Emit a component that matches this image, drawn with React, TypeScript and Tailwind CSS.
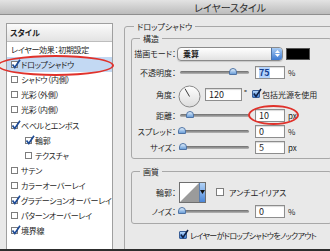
import React from 'react';

type Effect = {
  label: string;
  checked?: boolean;
  indent?: boolean;
  selected?: boolean;
  plain?: boolean;
};

const effects: Effect[] = [
  { label: 'レイヤー効果：初期設定', plain: true },
  { label: 'ドロップシャドウ', checked: true, selected: true },
  { label: 'シャドウ（内側）' },
  { label: '光彩（外側）' },
  { label: '光彩（内側）' },
  { label: 'ベベルとエンボス', checked: true },
  { label: '輪郭', checked: true, indent: true },
  { label: 'テクスチャ', indent: true },
  { label: 'サテン' },
  { label: 'カラーオーバーレイ' },
  { label: 'グラデーションオーバーレイ', checked: true },
  { label: 'パターンオーバーレイ' },
  { label: '境界線', checked: true },
];

export default function App() {
  return (
    <div className="w-[330px] h-[251px] overflow-hidden flex flex-col bg-[#e9e9e9] text-[#1e1e1e] font-['Noto_Sans_CJK_JP','Noto_Sans',sans-serif] [font-feature-settings:'palt'] text-[8px] leading-[11px]">
      {/* Title bar (window is wider than the crop, title centred on it) */}
      <div className="w-[460px] h-[15px] shrink-0 flex items-center justify-center border-b border-[#8f8f8f] bg-linear-to-b from-[#e3e3e3] to-[#bcbcbc] text-[10px] text-[#2b2b2b]">
        レイヤースタイル
      </div>

      <div className="flex flex-1 min-h-0 overflow-hidden">
        <div className="w-[113px] shrink-0 pl-[6px] pt-[8px]">
          <StyleList />
        </div>
        <div className="pl-[11px] pt-[6px]">
          <DropShadowPanel />
        </div>
      </div>

      <div className="h-[2px] shrink-0 bg-[#2d2d2d]" />
    </div>
  );
}

function StyleList() {
  return (
    <div className="relative h-[240px] w-[107px] border border-[#9f9f9f] bg-white">
      <div className="h-[18px] flex items-center pl-[3px] border-b border-[#bdbdbd] bg-linear-to-b from-[#fbfbfb] to-[#e3e3e3] font-bold">
        スタイル
      </div>
      {effects.map((e) => (
        <EffectRow key={e.label} {...e} />
      ))}
      {/* red marker ellipse */}
      <div className="absolute left-[-10px] top-[31px] w-[117px] h-[21px] rounded-[50%] border-2 border-[#e0322b]" />
    </div>
  );
}

function EffectRow({ label, checked, indent, selected, plain }: Effect) {
  return (
    <div
      className={`h-[15.1px] flex items-center gap-[3px] whitespace-nowrap ${indent ? 'pl-[18px]' : 'pl-[4px]'} ${selected ? 'bg-[#c3d9f3]' : ''}`}
    >
      {!plain && <ListCheck checked={checked} />}
      <span className="tracking-[-0.3px]">{label}</span>
    </div>
  );
}

function ListCheck({ checked }: { checked?: boolean }) {
  return (
    <span className="relative w-[7px] h-[7px] shrink-0 border border-[#7d7d7d] bg-white">
      {checked && (
        <svg className="absolute left-[-1px] top-[-3px]" width="10" height="10" viewBox="0 0 10 10">
          <path d="M1.5 5.5 L3.8 8.5 L9 0.8" stroke="#1d4b96" strokeWidth="1.7" fill="none" />
        </svg>
      )}
    </span>
  );
}

function AquaCheck({ className = '' }: { className?: string }) {
  return (
    <span className={`relative w-[8px] h-[8px] shrink-0 rounded-[1px] border border-[#3a5f98] bg-linear-to-b from-[#b4d5f7] to-[#3f80d6] ${className}`}>
      <svg className="absolute left-[-1px] top-[-3px]" width="10" height="10" viewBox="0 0 10 10">
        <path d="M1.8 5.6 L4 8.4 L9 1" stroke="#0d1f45" strokeWidth="1.6" fill="none" />
      </svg>
    </span>
  );
}

function Label({ children, className = '' }: { children: React.ReactNode; className?: string }) {
  return <span className={`w-[44px] shrink-0 text-right whitespace-nowrap ${className}`}>{children}</span>;
}

function Slider({ knob, className = '' }: { knob: number; className?: string }) {
  return (
    <div className={`relative h-[3px] w-[69px] shrink-0 rounded-full bg-linear-to-b from-[#6c6c6c] to-[#b8b8b8] ${className}`}>
      <span
        className="absolute top-[-3px] w-[8px] h-[7px] rounded-t-full rounded-b-[2px] border border-[#4f74a6] bg-linear-to-b from-[#e2effc] to-[#6c9fd8]"
        style={{ left: knob }}
      />
    </div>
  );
}

function Field({ children, className = '' }: { children: React.ReactNode; className?: string }) {
  return (
    <div className={`h-[13px] w-[30px] shrink-0 flex items-center pl-[3px] border border-[#8d8d8d] bg-white shadow-[inset_0_1px_1px_rgba(0,0,0,0.15)] text-[9px] ${className}`}>
      {children}
    </div>
  );
}

function Group({ title, className = '', children }: { title: string; className?: string; children: React.ReactNode }) {
  return (
    <fieldset className={`border border-[#a8a8a8] rounded-[3px] ${className}`}>
      <legend className="ml-[8px] px-[3px] leading-[11px]">{title}</legend>
      {children}
    </fieldset>
  );
}

function DropShadowPanel() {
  return (
    <fieldset className="w-[215px] h-[240px] border border-[#a8a8a8] rounded-[3px] px-[6px]">
      <legend className="ml-[3px] px-[3px] leading-[11px]">ドロップシャドウ</legend>

      <Group title="構造" className="mt-[1px] pb-[3px]">
        {/* 描画モード */}
        <div className="mt-[2px] h-[15px] flex items-center">
          <Label>描画モード：</Label>
          <div className="ml-[1px] flex h-[14px] w-[106px] items-center rounded-[4px] border border-[#8a8a8a] bg-linear-to-b from-white to-[#e2e2e2] shadow-[0_1px_1px_rgba(0,0,0,0.15)]">
            <span className="flex-1 pl-[5px] font-bold">乗算</span>
            <div className="flex h-full w-[11px] flex-col items-center justify-center gap-[1px] rounded-r-[3px] border-l border-[#4f74a6] bg-linear-to-b from-[#a9ccf4] to-[#3a78d0]">
              <svg width="5" height="3" viewBox="0 0 5 3"><path d="M0 3 L2.5 0 L5 3 Z" fill="#fff" /></svg>
              <svg width="5" height="3" viewBox="0 0 5 3"><path d="M0 0 L5 0 L2.5 3 Z" fill="#fff" /></svg>
            </div>
          </div>
          <div className="ml-[3px] h-[12px] w-[24px] border border-[#555] bg-black" />
        </div>

        {/* 不透明度 */}
        <div className="mt-[4px] h-[15px] flex items-center">
          <Label>不透明度：</Label>
          <Slider knob={49} className="ml-[4px]" />
          <Field className="ml-[6px] border-[#6f9bd4] shadow-[0_0_0_1px_#a8c7ee]">
            <span className="bg-[#b4d3fb] text-[#173f8f] font-bold">75</span>
          </Field>
          <span className="ml-[3px]">%</span>
        </div>

        {/* 角度 */}
        <div className="mt-[5px] h-[22px] flex items-start">
          <Label className="mt-[4px]">角度：</Label>
          <svg className="ml-[2px] shrink-0" width="23" height="23" viewBox="0 0 23 23">
            <defs>
              <linearGradient id="dial" x1="0" y1="0" x2="0" y2="1">
                <stop offset="0" stopColor="#ffffff" />
                <stop offset="1" stopColor="#dcdcdc" />
              </linearGradient>
            </defs>
            <circle cx="11.5" cy="11.5" r="10.5" fill="url(#dial)" stroke="#8a8a8a" />
            <line x1="11.5" y1="11.5" x2="7" y2="3.7" stroke="#3a3a3a" strokeWidth="1" />
          </svg>
          <Field className="ml-[4px] mt-[3px] w-[37px]">120</Field>
          <span className="ml-[2px] mt-[2px]">°</span>
          <AquaCheck className="ml-[5px] mt-[5px]" />
          <span className="ml-[2px] mt-[4px] whitespace-nowrap">包括光源を使用</span>
        </div>

        {/* 距離 */}
        <div className="relative h-[16px] flex items-center">
          <Label>距離：</Label>
          <Slider knob={6} className="ml-[4px]" />
          <Field className="ml-[6px]">10</Field>
          <span className="ml-[3px]">px</span>
          {/* red marker ellipse */}
          <div className="absolute left-[116px] top-[-2px] w-[51px] h-[20px] rounded-[50%] border-2 border-[#e0322b]" />
        </div>

        {/* スプレッド */}
        <div className="h-[16px] flex items-center">
          <Label>スプレッド：</Label>
          <Slider knob={-2} className="ml-[4px]" />
          <Field className="ml-[6px]">0</Field>
          <span className="ml-[3px]">%</span>
        </div>

        {/* サイズ */}
        <div className="h-[16px] flex items-center">
          <Label>サイズ：</Label>
          <Slider knob={-1} className="ml-[4px]" />
          <Field className="ml-[6px]">5</Field>
          <span className="ml-[3px]">px</span>
        </div>
      </Group>

      <Group title="画質" className="mt-[7px] pb-[5px]">
        <div className="mt-[4px] h-[22px] flex items-center">
          <Label>輪郭：</Label>
          <div className="ml-[3px] flex h-[21px] w-[27px] shrink-0 border border-[#6f6f6f] bg-white">
            <svg width="19" height="19" viewBox="0 0 19 19">
              <path d="M0 19 L19 0 L19 19 Z" fill="#9b9b9b" />
            </svg>
            <div className="flex flex-1 items-center justify-center border-l border-[#5b7fb0] bg-linear-to-b from-[#b2d2f5] to-[#4a86d8]">
              <svg width="5" height="4" viewBox="0 0 5 4"><path d="M0 0 L5 0 L2.5 4 Z" fill="#111" /></svg>
            </div>
          </div>
          <span className="ml-[10px] h-[8px] w-[8px] shrink-0 border border-[#7d7d7d] bg-white" />
          <span className="ml-[5px] whitespace-nowrap">アンチエイリアス</span>
        </div>
        <div className="mt-[1px] h-[14px] flex items-center">
          <Label>ノイズ：</Label>
          <Slider knob={-2} className="ml-[4px]" />
          <Field className="ml-[6px]">0</Field>
          <span className="ml-[3px]">%</span>
        </div>
      </Group>

      <div className="mt-[4px] h-[14px] flex items-center pl-[48px] whitespace-nowrap">
        <AquaCheck />
        <span className="ml-[3px] tracking-[-0.7px]">レイヤーがドロップシャドウをノックアウト</span>
      </div>
    </fieldset>
  );
}
